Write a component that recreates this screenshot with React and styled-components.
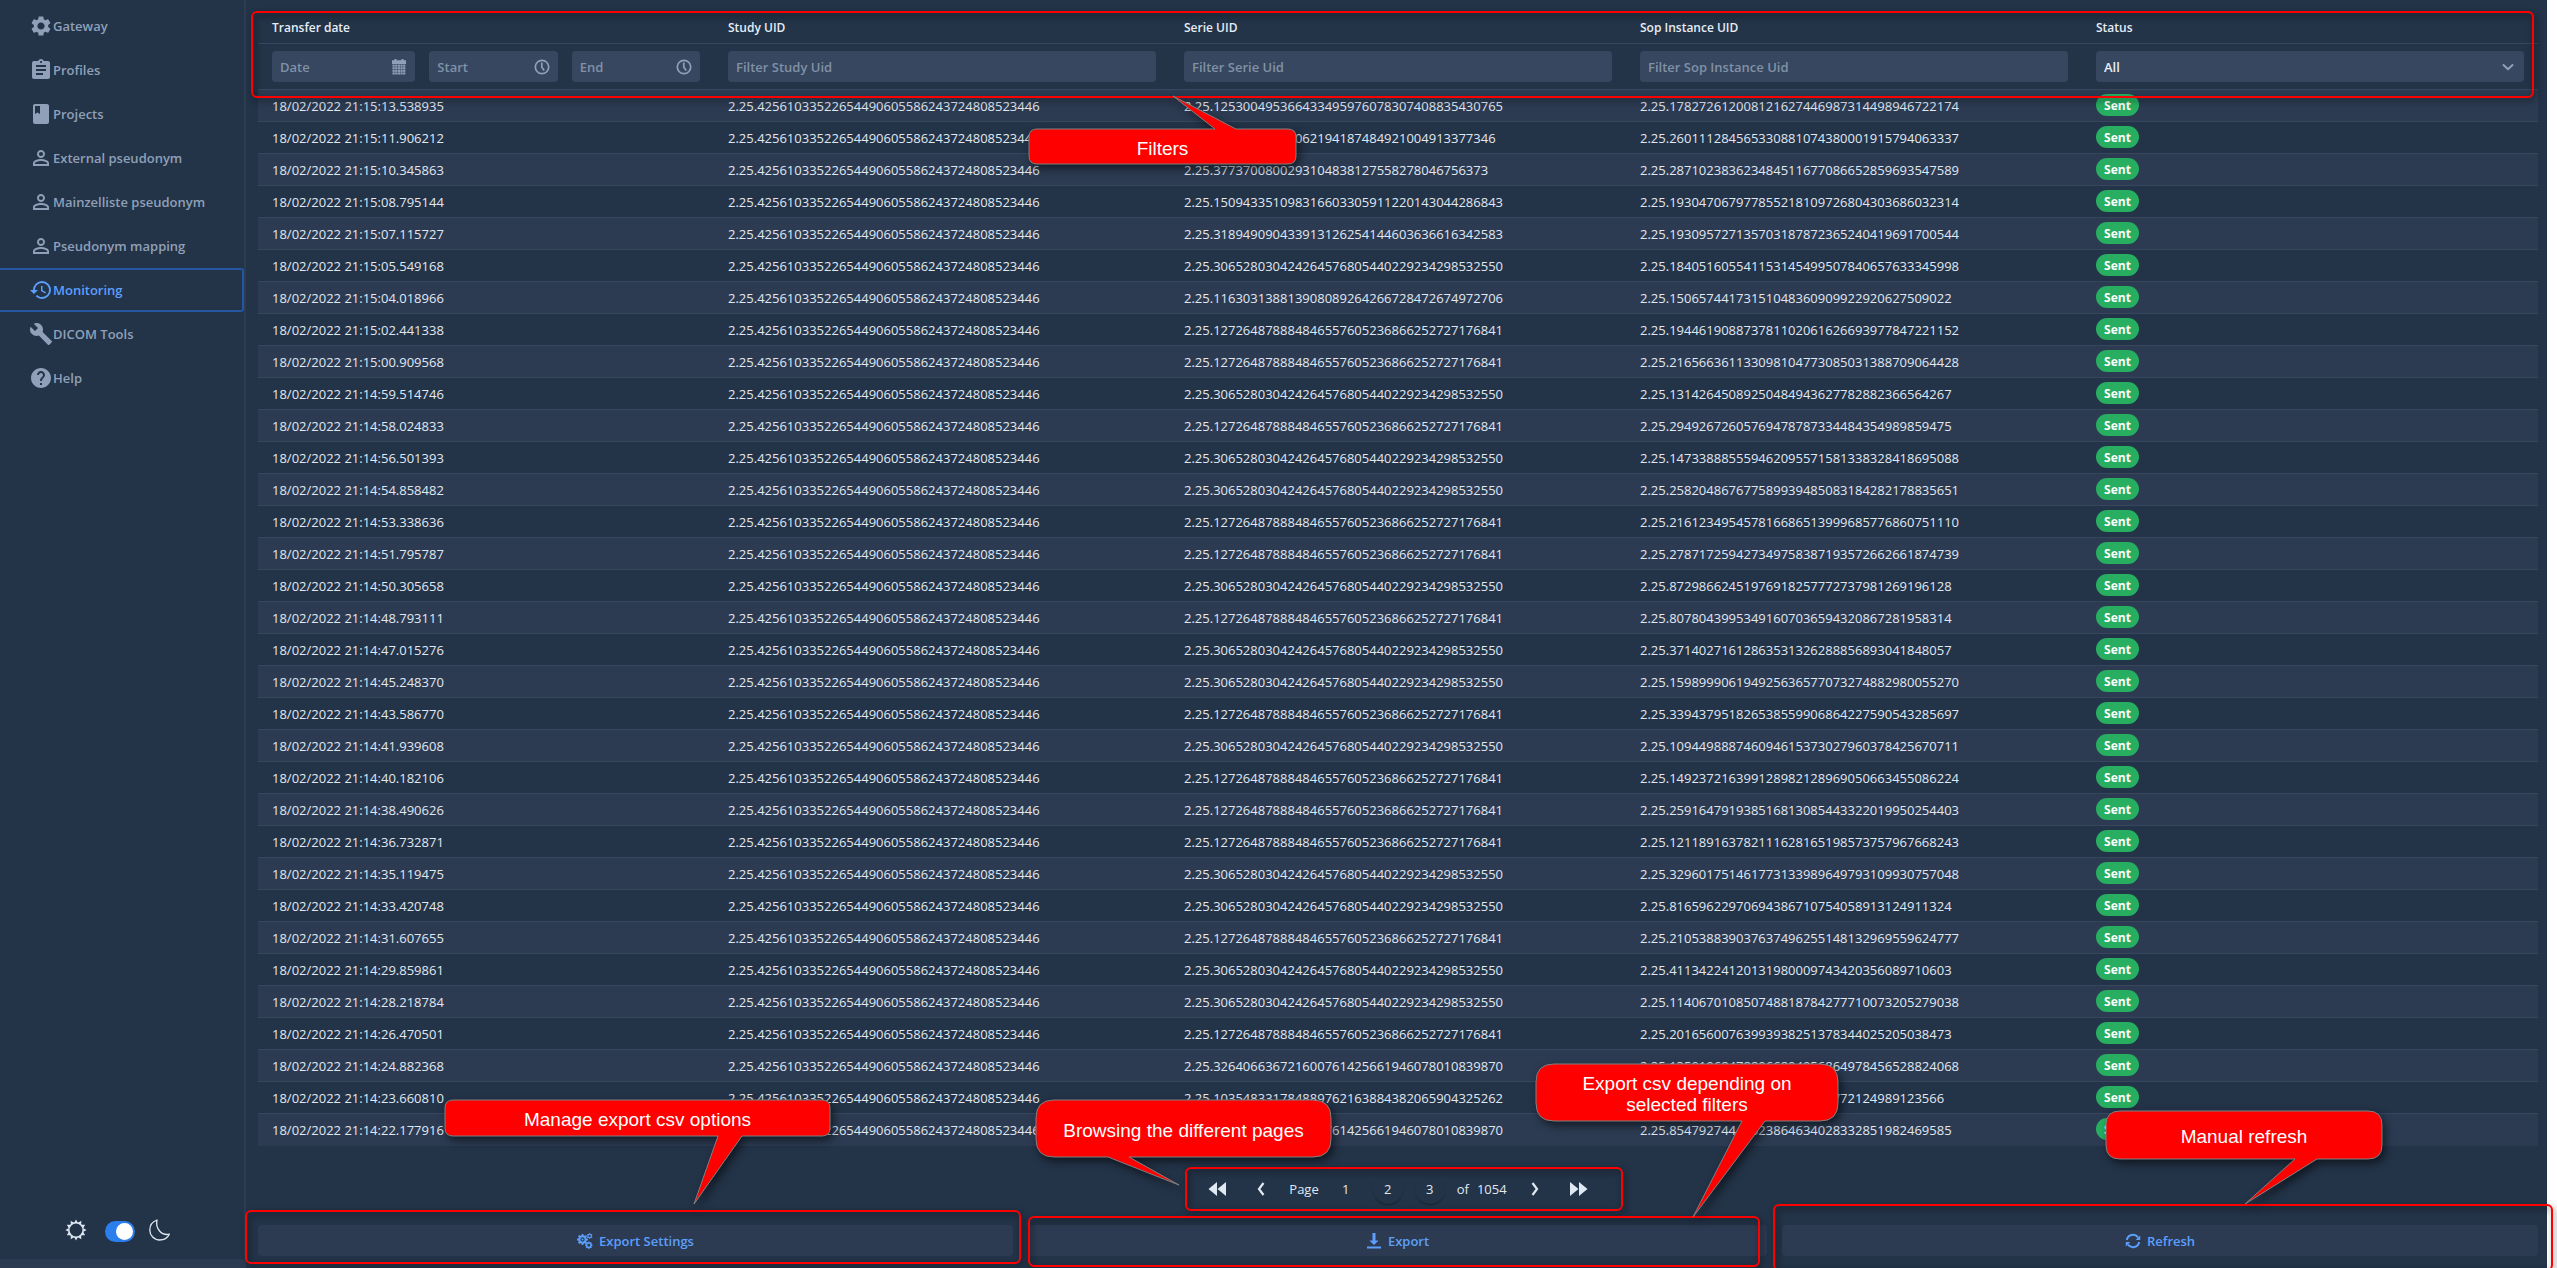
import React from "react";
import styled, { createGlobalStyle, css } from "styled-components";
import {
  MdSettings,
  MdAssignment,
  MdBook,
  MdPersonOutline,
  MdHistory,
  MdBuild,
  MdHelp,
} from "react-icons/md";

const color = {
  base: "#233348",
  stripe: "#2c3b52",
  field: "#36475f",
  line: "#36475e",
  body: "#e0e8f2",
  header: "#e6edf6",
  secondary: "#8fa0b8",
  placeholder: "#8191a7",
  primary: "#2b7fec",
  primaryText: "#5c9ffb",
  success: "#27ae60",
  mark: "#ff0000",
};

const GlobalStyle = createGlobalStyle`
  * { box-sizing: border-box; }
  body {
    margin: 0;
    background: #ffffff;
    font-family: "Open Sans", "Noto Sans", sans-serif;
    font-size: 13px;
    color: ${color.body};
  }
  button, input, select { font: inherit; color: inherit; }
`;

const Shell = styled.div`
  display: flex;
  min-height: 100vh;
  padding-right: 10px;
  overflow: hidden;
`;

/* Sidebar */

const Sidebar = styled.aside`
  flex: 0 0 246px;
  display: flex;
  flex-direction: column;
  padding-top: 4px;
  background: ${color.base};
  border-right: 2px solid #2c3c53;
`;

const Nav = styled.nav`
  display: flex;
  flex-direction: column;
  flex: 1;
`;

const NavLink = styled.a`
  display: flex;
  align-items: center;
  height: 44px;
  padding-left: 29px;
  border: 2px solid transparent;
  border-left: 0;
  border-radius: 0 3px 3px 0;
  font-weight: 600;
  color: ${color.secondary};
  text-decoration: none;
  svg { width: 24px; height: 24px; flex: none; }
  ${(p) =>
    p.$active &&
    css`
      border-color: #24579f;
      color: ${color.primaryText};
    `}
`;

const ThemeSwitch = styled.div`
  display: flex;
  align-items: center;
  gap: 14px;
  padding: 0 0 17px 65px;
`;

const Toggle = styled.input`
  appearance: none;
  display: flex;
  align-items: center;
  justify-content: flex-end;
  width: 30px;
  height: 21px;
  margin: 4px 0 0 4px;
  padding: 2px;
  border-radius: 11px;
  background: ${color.primary};
  &::after {
    content: "";
    width: 17px;
    height: 17px;
    border-radius: 50%;
    background: #ffffff;
  }
`;

const SidebarFoot = styled.div`
  height: 9px;
  background: ${color.stripe};
  border-radius: 0 3px 0 0;
`;

/* Main */

const Main = styled.main`
  flex: 1;
  min-width: 0;
  display: flex;
  flex-direction: column;
  padding: 11px 9px 12px 12px;
  background: ${color.base};
`;

const GridPanel = styled.div`
  position: relative;
`;

const Grid = styled.table`
  width: 100%;
  table-layout: fixed;
  border-collapse: separate;
  border-spacing: 0;
  td, th {
    padding: 0 14px;
    text-align: left;
    border-bottom: 1px solid ${color.line};
  }
  td {
    height: 32px;
    line-height: 20px;
    white-space: nowrap;
  }
  tbody tr:nth-child(odd) td { background: ${color.stripe}; }
  tbody tr:last-child td { border-bottom-color: ${color.stripe}; }
`;

const HeadCell = styled.th`
  height: 33px;
  font-size: 12px;
  font-weight: 600;
  color: ${color.header};
`;

const FilterCell = styled.th`
  height: 46px;
`;

const FilterRow = styled.div`
  display: flex;
  gap: 14px;
`;

const Field = styled.label`
  display: flex;
  align-items: center;
  flex: ${(p) => p.$grow || 1} 1 0;
  min-width: 0;
  height: 31px;
  padding: 0 8px;
  border-radius: 4px;
  background: ${color.field};
  color: ${color.secondary};
  svg { flex: none; }
`;

const TextInput = styled.input`
  flex: 1;
  min-width: 0;
  padding: 0;
  border: 0;
  outline: 0;
  background: transparent;
  font-weight: 600;
  &::placeholder { color: ${color.placeholder}; opacity: 1; }
`;

const StatusSelect = styled.select`
  flex: 1;
  appearance: none;
  padding: 0;
  border: 0;
  outline: 0;
  background: transparent;
  font-weight: 600;
  color: ${color.header};
`;

const Badge = styled.span`
  display: block;
  width: 43px;
  height: 22px;
  margin-bottom: 1px;
  border-radius: 11px;
  background: ${color.success};
  color: #ffffff;
  font-size: 12px;
  font-weight: 700;
  line-height: 23px;
  text-align: center;
`;

const Pager = styled.div`
  position: relative;
  align-self: center;
  display: flex;
  align-items: center;
  justify-content: center;
  gap: 12px;
  width: 438px;
  height: 44px;
  margin: 21px 0 14px;
`;

const PagerButton = styled.button`
  display: flex;
  align-items: center;
  justify-content: center;
  width: ${(p) => (p.$arrow ? 32 : 30)}px;
  height: 30px;
  padding: 0;
  border: 0;
  border-radius: 50%;
  background: transparent;
  ${(p) => p.$raised && css`box-shadow: 0 2px 2px -1px rgba(0, 0, 0, 0.35);`}
`;

const PageTotal = styled.span`
  display: flex;
  gap: 8px;
`;

const Actions = styled.div`
  display: grid;
  grid-template-columns: 755fr 739fr 756fr;
  gap: 15px;
`;

const ActionSlot = styled.div`
  position: relative;
`;

const ActionButton = styled.button`
  display: flex;
  align-items: center;
  justify-content: center;
  gap: 6px;
  width: 100%;
  height: 31px;
  padding: 0;
  border: 0;
  border-radius: 4px;
  background: ${color.stripe};
  font-weight: 600;
  color: ${color.primaryText};
`;

/* Annotations drawn over the page */

const Frame = styled.div`
  position: absolute;
  z-index: 1;
  top: ${(p) => p.$top || 0}px;
  right: ${(p) => p.$right || 0}px;
  left: ${(p) => p.$left || 0}px;
  ${(p) => (p.$height ? `height: ${p.$height}px;` : `bottom: ${p.$bottom || 0}px;`)}
  border: 2px solid ${color.mark};
  border-radius: 6px;
  filter: drop-shadow(2px 3px 3px rgba(0, 0, 0, 0.6));
  pointer-events: none;
`;

const CalloutBox = styled.div`
  position: absolute;
  z-index: 2;
  left: ${(p) => p.$left}px;
  top: ${(p) => p.$top}px;
  width: ${(p) => p.$width}px;
  height: ${(p) => p.$height}px;
  display: flex;
  align-items: center;
  justify-content: center;
  padding-top: 3px;
  svg {
    position: absolute;
    inset: 0;
    overflow: visible;
    filter: drop-shadow(3px 4px 4px rgba(0, 0, 0, 0.55));
  }
`;

const CalloutText = styled.span`
  position: relative;
  font-family: "Liberation Sans", Arial, sans-serif;
  font-size: 19px;
  line-height: 21px;
  color: #ffffff;
  text-align: center;
  white-space: pre;
`;

function Callout({ left, top, width: w, height: h, radius: r, base, tip, children }) {
  const [b1, b2] = base;
  const up = tip[1] < 0;
  const topEdge = up ? `L${b1} 0 L${tip[0]} ${tip[1]} L${b2} 0` : "";
  const bottomEdge = up ? "" : `L${b2} ${h} L${tip[0]} ${tip[1]} L${b1} ${h}`;
  const d = `M${r} 0 ${topEdge} L${w - r} 0 Q${w} 0 ${w} ${r} L${w} ${h - r} Q${w} ${h} ${w - r} ${h} ${bottomEdge} L${r} ${h} Q0 ${h} 0 ${h - r} L0 ${r} Q0 0 ${r} 0Z`;
  return (
    <CalloutBox $left={left} $top={top} $width={w} $height={h}>
      <svg width={w} height={h} aria-hidden="true">
        <path d={d} fill={color.mark} stroke="#808080" strokeWidth="1" />
      </svg>
      <CalloutText>{children}</CalloutText>
    </CalloutBox>
  );
}

/* Icons */

const CalendarIcon = () => (
  <svg width="16" height="16" viewBox="0 0 16 16" fill="currentColor" aria-hidden="true">
    <path d="M3.500 0h2v2h-2zM10.500 0h2v2h-2zM1 1.200h14V5H1z" />
    {[5.600, 8.200, 10.800, 13.400].map((y) =>
      [1.500, 4.150, 6.800, 9.450, 12.100].map((x) => (
        <rect key={`${x}-${y}`} x={x} y={y} width="2.200" height="2.100" />
      ))
    )}
  </svg>
);

const ClockIcon = () => (
  <svg width="16" height="16" viewBox="0 0 16 16" fill="none" stroke="currentColor" strokeWidth="1.7" aria-hidden="true">
    <circle cx="8" cy="8" r="6.7" />
    <path d="M7.8 3.5v4.7l2.4 3.3" />
  </svg>
);

const ChevronIcon = () => (
  <svg width="16" height="16" viewBox="0 0 16 16" fill="none" stroke="currentColor" strokeWidth="2" strokeLinecap="round" strokeLinejoin="round" aria-hidden="true">
    <path d="M3.5 6l4.5 4.2L12.5 6" />
  </svg>
);

const SunIcon = () => (
  <svg width="22" height="22" viewBox="0 0 22 22" aria-hidden="true">
    <circle cx="11" cy="11" r="7.2" fill="none" stroke={color.body} strokeWidth="1.5" />
    {Array.from({ length: 12 }, (_, i) => (
      <path key={i} d="M9.2 3.7L11 0.4L12.8 3.7Z" fill={color.body} transform={`rotate(${i * 30} 11 11)`} />
    ))}
  </svg>
);

const MoonIcon = () => (
  <svg width="22" height="22" viewBox="0 0 22 22" fill="none" stroke={color.body} strokeWidth="1.3" strokeLinejoin="round" aria-hidden="true">
    <path d="M8 1C3.500 2.600 0.800 6.500 0.800 11c0 5.500 4.300 10 9.800 10 4.300 0 8-2.200 9.700-5.800C12.500 17 6.200 9.500 8 1Z" />
  </svg>
);

const DoubleLeft = () => (
  <svg width="18" height="14" viewBox="0 0 18 14" fill="currentColor" aria-hidden="true">
    <path d="M9 0v14L0.500 7ZM18 0v14L9.500 7Z" />
  </svg>
);

const DoubleRight = () => (
  <svg width="18" height="14" viewBox="0 0 18 14" fill="currentColor" aria-hidden="true">
    <path d="M0 0v14L8.500 7ZM9 0v14L17.500 7Z" />
  </svg>
);

const SingleLeft = () => (
  <svg width="8" height="14" viewBox="0 0 8 14" fill="none" stroke="currentColor" strokeWidth="2.200" aria-hidden="true">
    <path d="M6.500 1L2 7L6.500 13" />
  </svg>
);

const SingleRight = () => (
  <svg width="8" height="14" viewBox="0 0 8 14" fill="none" stroke="currentColor" strokeWidth="2.200" aria-hidden="true">
    <path d="M1.500 1L6 7L1.500 13" />
  </svg>
);

const Cog = ({ x, y, r, teeth }) => (
  <g transform={`translate(${x} ${y})`}>
    <circle r={r * 0.6} fill="none" stroke="currentColor" strokeWidth={r * 0.4} />
    {Array.from({ length: teeth }, (_, i) => (
      <rect key={i} x={-r * 0.18} y={-r} width={r * 0.36} height={r * 0.4} fill="currentColor" transform={`rotate(${(i * 360) / teeth})`} />
    ))}
  </g>
);

const CogsIcon = () => (
  <svg width="16" height="16" viewBox="0 0 16 16" aria-hidden="true">
    <Cog x={5.5} y={6.500} r={5.400} teeth={8} />
    <circle cx="5.500" cy="6.500" r="1" fill="currentColor" />
    <Cog x={12.700} y={3} r={2.900} teeth={6} />
    <Cog x={11.800} y={12.200} r={3.700} teeth={8} />
  </svg>
);

const DownloadIcon = () => (
  <svg width="16" height="16" viewBox="0 0 16 16" fill="currentColor" aria-hidden="true">
    <path d="M6.500 0h3v7.500h3L8 12L3.500 7.500h3zM1 13.500h14V15.500H1z" />
  </svg>
);

const RefreshIcon = () => (
  <svg width="16" height="16" viewBox="0 0 16 16" fill="none" stroke="currentColor" strokeWidth="2" aria-hidden="true">
    <path d="M1.800 7A6.300 6.300 0 0 1 13 4.300M14.200 9A6.300 6.300 0 0 1 3 11.700" />
    <path d="M15.200 2.500V7H10.700Z M0.800 13.500V9H5.300Z" fill="currentColor" stroke="none" />
  </svg>
);

/* Data */

const navItems = [
  ["Gateway", MdSettings],
  ["Profiles", MdAssignment],
  ["Projects", MdBook],
  ["External pseudonym", MdPersonOutline],
  ["Mainzelliste pseudonym", MdPersonOutline],
  ["Pseudonym mapping", MdPersonOutline],
  ["Monitoring", MdHistory],
  ["DICOM Tools", MdBuild],
  ["Help", MdHelp],
];

const STUDY = "42561033522654490605586243724808523446";
const A = "127264878884846557605236866252727176841";
const B = "306528030424264576805440229234298532550";
const C = "326406636721600761425661946078010839870";

const transfers = [
  ["15:13.538935", "125300495366433495976078307408835430765", "178272612008121627446987314498946722174"],
  ["15:11.906212", "24031875496062194187484921004913377346", "260111284565330881074380001915794063337"],
  ["15:10.345863", "3773700800293104838127558278046756373", "287102383623484511677086652859693547589"],
  ["15:08.795144", "150943351098316603305911220143044286843", "193047067977855218109726804303686032314"],
  ["15:07.115727", "318949090433913126254144603636616342583", "193095727135703187872365240419691700544"],
  ["15:05.549168", B, "184051605541153145499507840657633345998"],
  ["15:04.018966", "116303138813908089264266728472674972706", "15065744173151048360909922920627509022"],
  ["15:02.441338", A, "194461908873781102061626693977847221152"],
  ["15:00.909568", A, "216566361133098104773085031388709064428"],
  ["14:59.514746", B, "13142645089250484943627782882366564267"],
  ["14:58.024833", A, "29492672605769478787334484354989859475"],
  ["14:56.501393", B, "147338885559462095571581338328418695088"],
  ["14:54.858482", B, "258204867677589939485083184282178835651"],
  ["14:53.338636", A, "216123495457816686513999685776860751110"],
  ["14:51.795787", A, "278717259427349758387193572662661874739"],
  ["14:50.305658", B, "87298662451976918257772737981269196128"],
  ["14:48.793111", A, "80780439953491607036594320867281958314"],
  ["14:47.015276", B, "37140271612863531326288856893041848057"],
  ["14:45.248370", B, "159899906194925636577073274882980055270"],
  ["14:43.586770", A, "339437951826538559906864227590543285697"],
  ["14:41.939608", B, "109449888746094615373027960378425670711"],
  ["14:40.182106", A, "149237216399128982128969050663455086224"],
  ["14:38.490626", A, "259164791938516813085443322019950254403"],
  ["14:36.732871", A, "121189163782111628165198573757967668243"],
  ["14:35.119475", B, "329601751461773133989649793109930757048"],
  ["14:33.420748", B, "81659622970694386710754058913124911324"],
  ["14:31.607655", A, "210538839037637496255148132969559624777"],
  ["14:29.859861", B, "41134224120131980009743420356089710603"],
  ["14:28.218784", B, "114067010850748818784277710073205279038"],
  ["14:26.470501", A, "20165600763993938251378344025205038473"],
  ["14:24.882368", C, "135919684788966804956864978456528824068"],
  ["14:23.660810", "103548331784889762163884382065904325262", "3308415729604418275930772124989123566"],
  ["14:22.177916", C, "85479274446023864634028332851982469585"],
];

const columns = ["Transfer date", "Study UID", "Serie UID", "Sop Instance UID", "Status"];

const UidFilter = ({ name }) => (
  <FilterCell>
    <Field>
      <TextInput placeholder={`Filter ${name} Uid`} aria-label={`Filter ${name} Uid`} />
    </Field>
  </FilterCell>
);

export default function App() {
  return (
    <>
      <GlobalStyle />
      <Shell>
        <Sidebar>
          <Nav>
            {navItems.map(([label, Icon]) => (
              <NavLink key={label} href="#" $active={label === "Monitoring"}>
                <Icon aria-hidden="true" />
                {label}
              </NavLink>
            ))}
          </Nav>
          <ThemeSwitch>
            <SunIcon />
            <Toggle type="checkbox" aria-label="Dark theme" defaultChecked />
            <MoonIcon />
          </ThemeSwitch>
          <SidebarFoot />
        </Sidebar>

        <Main>
          <GridPanel>
            <Grid>
              <thead>
                <tr>
                  {columns.map((name) => (
                    <HeadCell key={name} scope="col">{name}</HeadCell>
                  ))}
                </tr>
                <tr>
                  <FilterCell>
                    <FilterRow>
                      <Field $grow={127}>
                        <TextInput placeholder="Date" aria-label="Date" />
                        <CalendarIcon />
                      </Field>
                      <Field $grow={112}>
                        <TextInput placeholder="Start" aria-label="Start" />
                        <ClockIcon />
                      </Field>
                      <Field $grow={112}>
                        <TextInput placeholder="End" aria-label="End" />
                        <ClockIcon />
                      </Field>
                    </FilterRow>
                  </FilterCell>
                  <UidFilter name="Study" />
                  <UidFilter name="Serie" />
                  <UidFilter name="Sop Instance" />
                  <FilterCell>
                    <Field>
                      <StatusSelect aria-label="Status" defaultValue="All">
                        <option>All</option>
                        <option>Sent</option>
                      </StatusSelect>
                      <ChevronIcon />
                    </Field>
                  </FilterCell>
                </tr>
              </thead>
              <tbody>
                {transfers.map(([time, serie, sop]) => (
                  <tr key={time}>
                    <td>18/02/2022 21:{time}</td>
                    <td>2.25.{STUDY}</td>
                    <td>2.25.{serie}</td>
                    <td>2.25.{sop}</td>
                    <td><Badge>Sent</Badge></td>
                  </tr>
                ))}
              </tbody>
            </Grid>
            <Frame $left={-7} $right={4} $height={87} />
            <Callout left={771} top={118} width={267} height={35} radius={8} base={[186, 207]} tip={[144, -33]}>
              Filters
            </Callout>
          </GridPanel>

          <Pager>
            <PagerButton $arrow aria-label="First page"><DoubleLeft /></PagerButton>
            <PagerButton $arrow aria-label="Previous page"><SingleLeft /></PagerButton>
            <span>Page</span>
            <PagerButton>1</PagerButton>
            <PagerButton $raised>2</PagerButton>
            <PagerButton $raised>3</PagerButton>
            <PageTotal><span>of</span><span>1054</span></PageTotal>
            <PagerButton $arrow aria-label="Next page"><SingleRight /></PagerButton>
            <PagerButton $arrow aria-label="Last page"><DoubleRight /></PagerButton>
            <Frame $left={6} $right={-6} />
            <Callout left={-143} top={-67} width={295} height={57} radius={18} base={[72, 93]} tip={[143, 85]}>
              Browsing the different pages
            </Callout>
          </Pager>

          <Actions>
            <ActionSlot>
              <ActionButton><CogsIcon />Export Settings</ActionButton>
              <Frame $top={-15} $right={-8} $bottom={-8} $left={-13} />
              <Callout left={187} top={-125} width={385} height={36} radius={8} base={[273, 297]} tip={[249, 104]}>
                Manage export csv options
              </Callout>
            </ActionSlot>
            <ActionSlot>
              <ActionButton><DownloadIcon />Export</ActionButton>
              <Frame $top={-9} $right={7} $bottom={-11} />
              <Callout left={508} top={-161} width={302} height={57} radius={18} base={[206, 229]} tip={[157, 153]}>
                {"Export csv depending on\nselected filters"}
              </Callout>
            </ActionSlot>
            <ActionSlot>
              <ActionButton><RefreshIcon />Refresh</ActionButton>
              <Frame $top={-21} $right={-15} $bottom={-15} $left={-9} />
              <Callout left={324} top={-114} width={276} height={48} radius={14} base={[189, 211]} tip={[139, 93]}>
                Manual refresh
              </Callout>
            </ActionSlot>
          </Actions>
        </Main>
      </Shell>
    </>
  );
}
